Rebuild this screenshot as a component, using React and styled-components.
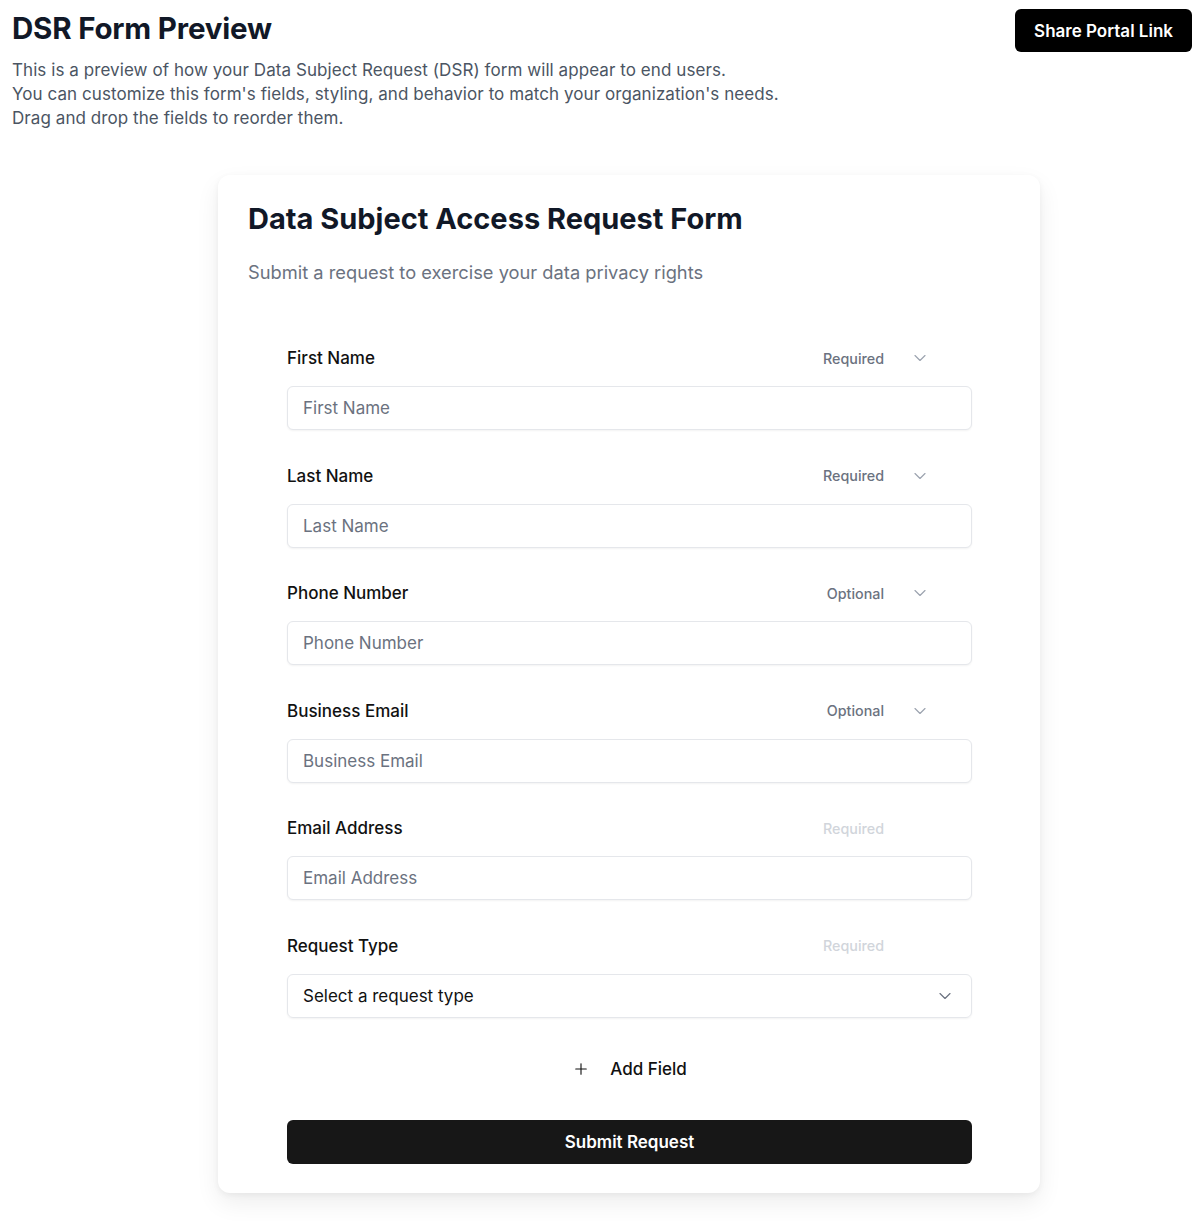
import React from "react";
import styled, { createGlobalStyle } from "styled-components";
import { ChevronDown, Plus } from "lucide-react";

const GlobalStyle = createGlobalStyle`
  body {
    margin: 0;
    background: #ffffff;
    font-family: "Inter", "Noto Sans", sans-serif;
    color: #111827;
  }
`;

const fields = [
  { label: "First Name", status: "Required", editable: true },
  { label: "Last Name", status: "Required", editable: true },
  { label: "Phone Number", status: "Optional", editable: true },
  { label: "Business Email", status: "Optional", editable: true },
  { label: "Email Address", status: "Required", editable: false },
];

const App = () => {
  return (
    <Page>
      <GlobalStyle />
      <Header>
        <div>
          <Title>DSR Form Preview</Title>
          <Description>
            This is a preview of how your Data Subject Request (DSR) form will appear to end users.
            <br />
            You can customize this form's fields, styling, and behavior to match your organization's needs.
            <br />
            Drag and drop the fields to reorder them.
          </Description>
        </div>
        <ShareButton>Share Portal Link</ShareButton>
      </Header>
      <CardArea>
        <Card>
          <CardTitle>Data Subject Access Request Form</CardTitle>
          <CardSubtitle>Submit a request to exercise your data privacy rights</CardSubtitle>
          <Fields>
            {fields.map((f) => (
              <Field key={f.label}>
                <LabelRow>
                  <Label>{f.label}</Label>
                  <Status $muted={!f.editable}>
                    {f.status}
                    <ChevronSlot>
                      {f.editable && <ChevronDown size={20} strokeWidth={1.4} color="#9ca3af" />}
                    </ChevronSlot>
                  </Status>
                </LabelRow>
                <Input placeholder={f.label} />
              </Field>
            ))}
            <Field>
              <LabelRow>
                <Label>Request Type</Label>
                <Status $muted>
                  Required
                  <ChevronSlot />
                </Status>
              </LabelRow>
              <Select>
                <span>Select a request type</span>
                <ChevronDown size={20} strokeWidth={1.4} color="#6b7280" />
              </Select>
            </Field>
            <AddField>
              <Plus size={18} strokeWidth={1.5} />
              <span>Add Field</span>
            </AddField>
            <SubmitButton>Submit Request</SubmitButton>
          </Fields>
        </Card>
      </CardArea>
    </Page>
  );
};

const Page = styled.div`
  padding: 9px 8px 28px 12px;
`;

const Header = styled.div`
  display: flex;
  justify-content: space-between;
  align-items: flex-start;
`;

const Title = styled.h1`
  margin: 0;
  font-size: 29.5px;
  line-height: 38px;
  font-weight: 700;
  color: #111827;
  letter-spacing: -0.2px;
`;

const Description = styled.p`
  margin: 11px 0 0 0;
  font-size: 17px;
  line-height: 24px;
  letter-spacing: 0.07px;
  color: #4b5563;
`;

const ShareButton = styled.button`
  background: #000000;
  color: #ffffff;
  border: none;
  border-radius: 6px;
  height: 43px;
  padding: 0 19px;
  font-family: "Inter", sans-serif;
  font-size: 17px;
  font-weight: 600;
  cursor: pointer;
`;

const CardArea = styled.div`
  padding: 45px 0 0 206px;
`;

const Card = styled.div`
  width: 822px;
  box-sizing: border-box;
  background: #ffffff;
  border-radius: 12px;
  box-shadow: 0 10px 24px rgba(0, 0, 0, 0.07), 0 2px 6px rgba(0, 0, 0, 0.05);
  padding: 26px 30px 29px 30px;
`;

const CardTitle = styled.h2`
  margin: 0;
  font-size: 29px;
  line-height: 36px;
  font-weight: 700;
  color: #111827;
`;

const CardSubtitle = styled.p`
  margin: 21px 0 0 0;
  font-size: 18.3px;
  line-height: 28px;
  color: #6b7280;
`;

const Fields = styled.div`
  padding: 62px 38px 0 39px;
  display: flex;
  flex-direction: column;
`;

const Field = styled.div`
  display: flex;
  flex-direction: column;
  gap: 18px;
  margin-bottom: 35.6px;
`;

const LabelRow = styled.div`
  display: flex;
  justify-content: space-between;
  align-items: center;
  height: 20px;
`;

const Label = styled.label`
  font-size: 17px;
  font-weight: 500;
  color: #111111;
`;

const Status = styled.div`
  display: flex;
  align-items: center;
  gap: 26px;
  margin-right: 42px;
  font-size: 14.3px;
  font-weight: 500;
  color: ${(p) => (p.$muted ? "#d1d5db" : "#6b7280")};
`;

const ChevronSlot = styled.span`
  width: 20px;
  height: 20px;
  display: flex;
  align-items: center;
`;

const Input = styled.input`
  height: 44px;
  box-sizing: border-box;
  border: 1px solid #e5e7eb;
  border-radius: 6px;
  box-shadow: 0 1px 2px rgba(0, 0, 0, 0.05);
  padding: 0 15px;
  font-family: "Inter", sans-serif;
  font-size: 17px;
  color: #111827;
  outline: none;
  &::placeholder {
    color: #6b7280;
  }
`;

const Select = styled.div`
  height: 44px;
  box-sizing: border-box;
  border: 1px solid #e5e7eb;
  border-radius: 6px;
  box-shadow: 0 1px 2px rgba(0, 0, 0, 0.05);
  padding: 0 16px 0 15px;
  display: flex;
  align-items: center;
  justify-content: space-between;
  font-size: 17px;
  color: #111111;
`;

const AddField = styled.button`
  align-self: center;
  display: flex;
  align-items: center;
  gap: 20px;
  background: transparent;
  border: none;
  margin: 2px 0 38px 0;
  padding: 0;
  font-family: "Inter", sans-serif;
  font-size: 17px;
  font-weight: 500;
  color: #111111;
  height: 26px;
  cursor: pointer;
`;

const SubmitButton = styled.button`
  height: 44px;
  border: none;
  border-radius: 6px;
  background: #171717;
  color: #ffffff;
  font-family: "Inter", sans-serif;
  font-size: 17px;
  font-weight: 600;
  cursor: pointer;
`;

export default App;
